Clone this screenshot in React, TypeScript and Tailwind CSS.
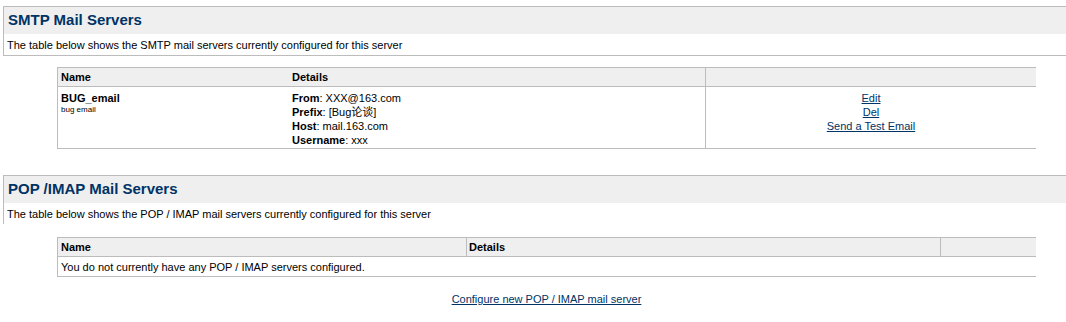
import React from "react";

const font = { fontFamily: '"Liberation Sans", Arial, "Noto Sans CJK SC", sans-serif' };

function Section({ title, desc, bottom }: { title: string; desc: string; bottom?: boolean }) {
  return (
    <div
      className={`ml-[3px] border-t border-l border-[#bcbcbc] ${bottom ? "border-b" : ""}`}
    >
      <div className="h-[27px] bg-[#efefef] pl-[4px] pb-[2px] flex items-center text-[15px] font-bold text-[#003366] leading-none">
        {title}
      </div>
      <div className="h-[21px] pl-[3px] flex items-center text-[11px] leading-[14px] text-black">
        {desc}
      </div>
    </div>
  );
}

export default function App() {
  return (
    <div style={font} className="w-[1066px] h-[322px] bg-white text-black text-[11px] leading-[14px] overflow-hidden pt-[6px]">
      <Section
        title="SMTP Mail Servers"
        desc="The table below shows the SMTP mail servers currently configured for this server"
        bottom
      />

      {/* SMTP table */}
      <div className="ml-[57px] w-[979px] mt-[11px] border-t border-l border-b border-[#bcbcbc]">
        <div className="grid grid-cols-[231px_416px_331px] h-[19px] bg-[#efefef] border-b border-[#bcbcbc] font-bold">
          <div className="pl-[3px] flex items-center">Name</div>
          <div className="pl-[3px] flex items-center">Details</div>
          <div className="border-l border-[#bcbcbc]" />
        </div>
        <div className="grid grid-cols-[231px_416px_331px] h-[61px]">
          <div className="pl-[3px] pt-[4px]">
            <div className="font-bold leading-[14px]">BUG_email</div>
            <div className="text-[8px] leading-[10px]">bug email</div>
          </div>
          <div className="pl-[3px] pt-[4px]">
            <div><span className="font-bold">From</span>: XXX@163.com</div>
            <div><span className="font-bold">Prefix</span>: [Bug论谈]</div>
            <div><span className="font-bold">Host</span>: mail.163.com</div>
            <div><span className="font-bold">Username</span>: xxx</div>
          </div>
          <div className="border-l border-[#bcbcbc] pt-[4px] flex flex-col items-center">
            <a href="#" className="text-[#003366] underline">Edit</a>
            <a href="#" className="text-[#003366] underline">Del</a>
            <a href="#" className="text-[#003366] underline">Send a Test Email</a>
          </div>
        </div>
      </div>

      <div className="mt-[26px]">
        <Section
          title="POP /IMAP Mail Servers"
          desc="The table below shows the POP / IMAP mail servers currently configured for this server"
        />
      </div>

      {/* POP table */}
      <div className="ml-[57px] w-[979px] mt-[13px] border-t border-l border-b border-[#bcbcbc]">
        <div className="grid grid-cols-[408px_474px_96px] h-[19px] bg-[#efefef] border-b border-[#bcbcbc] font-bold">
          <div className="pl-[3px] flex items-center">Name</div>
          <div className="border-l border-[#bcbcbc] pl-[2px] flex items-center">Details</div>
          <div className="border-l border-[#bcbcbc]" />
        </div>
        <div className="h-[19px] pl-[3px] flex items-center">
          You do not currently have any POP / IMAP servers configured.
        </div>
      </div>

      <div className="ml-[57px] w-[979px] mt-[15px] flex justify-center">
        <a href="#" className="text-[#003366] underline">Configure new POP / IMAP mail server</a>
      </div>
    </div>
  );
}
